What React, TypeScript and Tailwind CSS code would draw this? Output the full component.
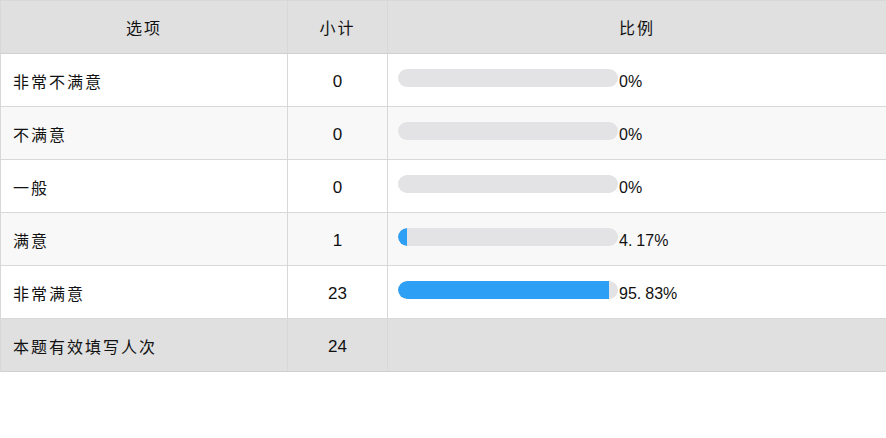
import React from "react";

const rows = [
  { label: "非常不满意", count: "0", pct: 0, text: ["0%"] },
  { label: "不满意", count: "0", pct: 0, text: ["0%"] },
  { label: "一般", count: "0", pct: 0, text: ["0%"] },
  { label: "满意", count: "1", pct: 4.17, text: ["4.", "17%"] },
  { label: "非常满意", count: "23", pct: 95.83, text: ["95.", "83%"] },
];

const cjk = "font-['Noto_Sans_CJK_SC','Liberation_Sans',sans-serif]";
const num = "font-['Liberation_Sans','Noto_Sans_CJK_SC',sans-serif]";

export default function App() {
  return (
    <div className="w-[886px] h-[438px] bg-white">
      <div className="w-[886px] border-t border-l border-[#d8d8d8] text-[#111]">
        {/* header */}
        <div className="flex h-[53px] border-b border-[#d0d0d0] bg-[#e0e0e0]">
          <div className={`w-[287px] border-r border-[#d8d8d8] flex items-center justify-center text-[16px] tracking-[2px] ${cjk}`}>
            选项
          </div>
          <div className={`w-[100px] border-r border-[#d8d8d8] flex items-center justify-center text-[16px] tracking-[2px] ${cjk}`}>
            小计
          </div>
          <div className={`flex-1 flex items-center justify-center text-[16px] tracking-[2px] ${cjk}`}>
            比例
          </div>
        </div>
        {rows.map((r, i) => (
          <div
            key={r.label}
            className={`flex h-[53px] border-b border-[#d8d8d8] ${i % 2 === 1 ? "bg-[#f8f8f8]" : "bg-white"}`}
          >
            <div className={`w-[287px] border-r border-[#d8d8d8] flex items-center pl-[12px] pt-[2px] text-[16px] tracking-[2px] ${cjk}`}>
              {r.label}
            </div>
            <div className={`w-[100px] border-r border-[#d8d8d8] flex items-center justify-center pt-[4px] text-[17px] ${num}`}>
              {r.count}
            </div>
            <div className="flex-1 flex items-center pl-[10px]">
              <div className="w-[220px] h-[18px] mb-[5px] rounded-full bg-[#e3e3e5] overflow-hidden">
                <div
                  className="h-full bg-[#2d9ff4] rounded-l-full"
                  style={{ width: `${r.pct}%` }}
                />
              </div>
              <span className={`ml-[1px] pt-[4px] text-[16px] ${num}`}>
                {r.text.length === 2 ? (
                  <>
                    {r.text[0]}
                    <span className="ml-[4px]">{r.text[1]}</span>
                  </>
                ) : (
                  r.text[0]
                )}
              </span>
            </div>
          </div>
        ))}
        <div className="flex h-[53px] border-b border-[#d0d0d0] bg-[#e0e0e0]">
          <div className={`w-[287px] border-r border-[#d8d8d8] flex items-center pl-[12px] pt-[2px] text-[16px] tracking-[2px] ${cjk}`}>
            本题有效填写人次
          </div>
          <div className={`w-[100px] border-r border-[#d8d8d8] flex items-center justify-center pt-[4px] text-[17px] ${num}`}>
            24
          </div>
          <div className="flex-1" />
        </div>
      </div>
    </div>
  );
}
